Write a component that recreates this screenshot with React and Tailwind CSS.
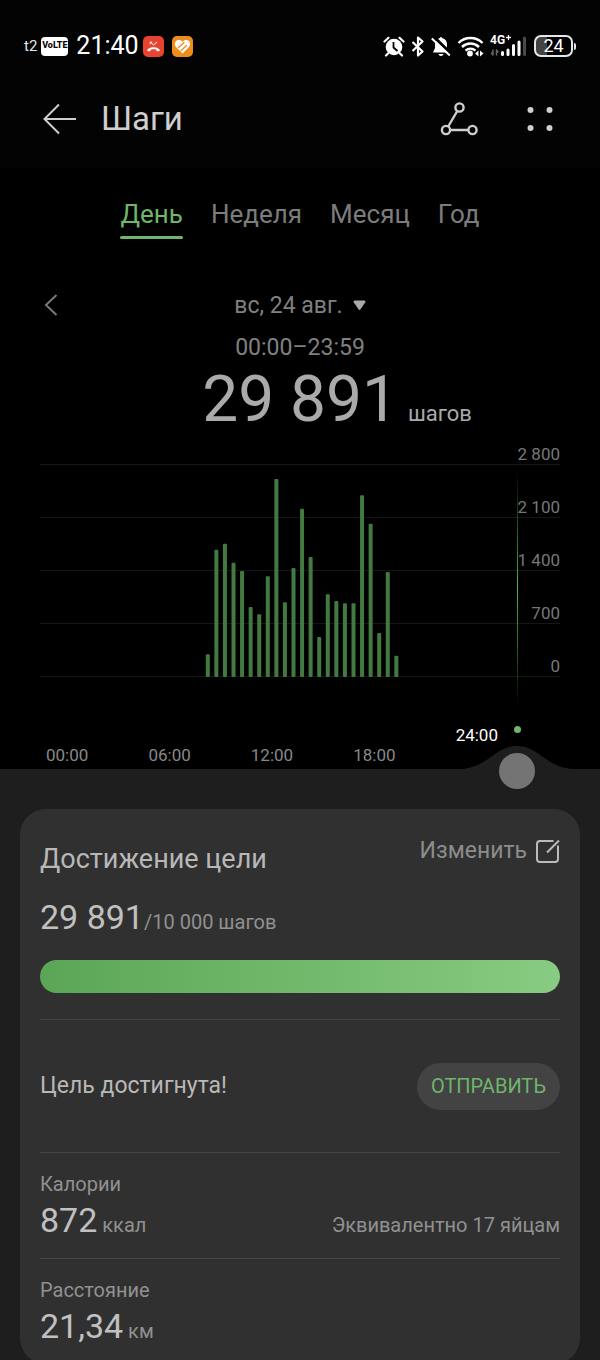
import React from 'react'

const TABS = ['День', 'Неделя', 'Месяц', 'Год']
const LEVELS = ['2 800', '2 100', '1 400', '700', '0']
const HOURS = ['00:00', '06:00', '12:00', '18:00']
const MAX_STEPS = 2800
const STEPS = [
  300, 1680, 1760, 1510, 1400, 925, 828, 1330, 2615, 987, 1440, 2223,
  1585, 528, 1092, 1004, 973, 973, 2400, 2025, 581, 1387, 281,
]

const StatusBar = () => {
  return (
    <div className="flex h-[92px] items-center justify-between px-6 text-white">
      <div className="flex items-center">
        <span className="text-[15px] leading-5 text-gray-200">t2</span>
        <span className="ml-1 flex h-[19px] w-[27px] items-center justify-center rounded-[4px] bg-white text-[9px] font-extrabold text-black">VoLTE</span>
        <span className="ml-2 text-[25px] leading-8">21:40</span>
        <svg className="ml-1" width="21" height="21" viewBox="0 0 21 21" fill="none">
          <rect width="21" height="21" rx="5" fill="#e8432f" />
          <path d="M4.2 14.6c-.3-1.2 2.600-3.300 6.300-3.300s6.600 2.100 6.300 3.300c-.2.9-3 .9-3.400.2l-.3-1.200c-1.600-.6-3.600-.6-5.200 0l-.3 1.200c-.4.7-3.200.7-3.400-.2z" fill="#fff" />
          <path d="M7.500 6.200l3 2.800 3.600-3M7.200 8.200v-2h2" stroke="#fff" strokeWidth="1" />
        </svg>
        <svg className="ml-2" width="21" height="21" viewBox="0 0 21 21" fill="none">
          <rect width="21" height="21" rx="5" fill="#ef8d1c" />
          <path d="M10.500 17.500L4 11C1.700 8.600 3 4.200 6.600 4c1.700-.1 2.800.6 3.900 1.700C11.600 4.600 12.800 4 14.300 4c3.700.1 5 4.300 2.700 7z" fill="#fff" />
          <path d="M6.500 11.500l5.500-5M9 14.800l5.500-5.300" stroke="#ef8d1c" strokeWidth="1.300" strokeLinecap="round" />
        </svg>
      </div>

      <div className="flex items-center">
        <svg width="22" height="21" viewBox="0 0 22 21" fill="none">
          <circle cx="11" cy="11" r="8.300" fill="#fff" />
          <path d="M1.500 5.500L5.500 1.800M20.500 5.500L16.500 1.800M5 17.500L3 19.500M17 17.500l2 2" stroke="#fff" strokeWidth="2.200" strokeLinecap="round" />
          <path d="M10.500 6v5.500l4 3.500" stroke="#000" strokeWidth="1.800" />
        </svg>
        <svg className="ml-[6px]" width="14" height="21" viewBox="0 0 14 21" fill="none" stroke="#fff" strokeWidth="2.200" strokeLinejoin="round">
          <path d="M1.500 6l10 9.500L7 19.500v-18l4.500 4L1.500 15" />
        </svg>
        <svg className="ml-[6px]" width="20" height="21" viewBox="0 0 20 21" fill="none">
          <path d="M8.800 2c.3-1.300 2.100-1.300 2.400 0 3.300.8 4.800 3.200 4.800 6.500v3.500l2 4.500H2l2-4.500V8.500C4 5.200 5.500 2.800 8.800 2z" fill="#fff" />
          <path d="M7.500 18h5c-.5 2.500-4.500 2.500-5 0z" fill="#fff" />
          <path d="M2.500 .5l18 17.500" stroke="#000" strokeWidth="3" />
          <path d="M.8 2.500l18 17" stroke="#fff" strokeWidth="2" />
        </svg>
        <svg className="ml-[6px]" width="27" height="21" viewBox="0 0 27 21" fill="none">
          <path d="M1.500 7c6.500-6.600 17.500-6.600 24 0M5 11c5-4.600 12-4.600 17 0M8.500 14.600c3-2.600 7-2.600 10 0" stroke="#fff" strokeWidth="2.400" />
          <circle cx="13" cy="17.500" r="2.900" fill="#fff" />
          <path d="M18 17.500l3.500-3v6zM26.500 17.500L23 14.500v6z" fill="#fff" />
        </svg>
        <div className="relative ml-[6px] h-[22px] w-9">
          <span className="absolute -top-px left-0 text-[12px] font-bold leading-3">4G</span>
          <svg className="h-full w-full" viewBox="0 0 36 22" fill="none" strokeLinecap="round">
            <path d="M16.500 2.500h4M18.500 .5v4" stroke="#fff" strokeWidth="1.300" />
            <path d="M3 15v5M6.500 15v5M1.500 18l1.500 2M8 17l-1.500-2" stroke="#666" strokeWidth="1.500" />
            <path d="M12.500 17.500v2M18 15v4.500M23.500 10.500v9M29 7v12.500" stroke="#fff" strokeWidth="3" />
            <path d="M34.500 3v16.500" stroke="#4a4a4a" strokeWidth="3" />
          </svg>
        </div>
        <div className="ml-2 flex h-[22px] w-[39px] items-center justify-center rounded-[7px] border-2 border-gray-200 bg-linear-to-r from-[#444] from-30% to-black to-30% text-[18px] leading-none">24</div>
        <div className="ml-px h-[7px] w-[2px] rounded-r bg-gray-200"></div>
      </div>
    </div>
  )
}

const Header = () => {
  return (
    <header className="flex h-[76px] items-center pb-[22px] pl-[43px] pr-[46px] text-[#cfcfcf]">
      <button aria-label="Назад">
        <svg width="34" height="32" viewBox="0 0 34 32" fill="none" stroke="currentColor" strokeWidth="2">
          <path d="M16 1.500L1.500 16 16 30.500M1.500 16H33" />
        </svg>
      </button>
      <h1 className="ml-6 text-[33px] leading-10">Шаги</h1>
      <button className="ml-auto" aria-label="Маршрут">
        <svg width="38" height="34" viewBox="0 0 38 34" fill="none" stroke="currentColor" strokeWidth="2.400">
          <circle cx="19.500" cy="5.500" r="4.100" />
          <circle cx="6" cy="28" r="4.100" />
          <circle cx="32.500" cy="28" r="4.100" />
          <path d="M17.300 9L8.200 24.500M10.100 28h18.300" />
        </svg>
      </button>
      <button className="ml-12" aria-label="Меню">
        <svg width="28" height="26" viewBox="0 0 28 26" fill="currentColor">
          <circle cx="4.500" cy="4" r="3" />
          <circle cx="23.500" cy="4" r="3" />
          <circle cx="4.500" cy="22" r="3" />
          <circle cx="23.500" cy="22" r="3" />
        </svg>
      </button>
    </header>
  )
}

const Tabs = () => {
  return (
    <nav className="flex justify-center gap-7 pt-7 text-[26px] leading-9">
      {TABS.map((tab, i) => (
        <button key={tab} className={i === 0 ? 'text-[#6fb56b]' : 'text-[#7c7c7c]'}>
          {tab}
          <span className={i === 0 ? 'mt-1 block h-[3px] rounded-full bg-[#6fb56b]' : 'mt-1 block h-[3px]'}></span>
        </button>
      ))}
    </nav>
  )
}

const Summary = () => {
  return (
    <section className="pt-[47px] text-[#808080]">
      <div className="relative flex h-10 items-center justify-center">
        <button className="absolute left-11" aria-label="Предыдущий день">
          <svg width="14" height="24" viewBox="0 0 14 24" fill="none" stroke="#777" strokeWidth="2">
            <path d="M12.500 1L2 11l10.500 10" />
          </svg>
        </button>
        <button className="flex items-center gap-[10px] text-[23px] leading-8">
          вс, 24 авг.
          <svg width="13" height="13" viewBox="0 0 13 13" fill="#aaa">
            <path d="M1.500 .5h10q1.500 .5 .8 1.800L7.500 9.300q-1 1.300-2 0L.7 2.300Q0 1 1.500 .5z" />
          </svg>
        </button>
      </div>
      <p className="pt-[6px] text-center text-[23px] leading-8">00:00–23:59</p>
      <p className="flex items-baseline justify-center pl-[74px] text-[#aaa]">
        <span className="text-[64px] leading-[72px]">29 891</span>
        <span className="ml-[10px] text-[22px]">шагов</span>
      </p>
    </section>
  )
}

const Chart = () => {
  return (
    <section className="relative h-[333px]">
      <div className="relative mx-10">
        <ul className="text-right text-[17px] leading-5 text-[#777]">
          {LEVELS.map((level, i) => (
            <li key={level} className={i === 0 ? 'h-[29px] border-b border-[#161616] pt-2' : 'h-[53px] border-b border-[#161616] pt-8'}>{level}</li>
          ))}
        </ul>
        <svg className="absolute bottom-0 left-0 h-[212px] w-full" viewBox="0 0 520 212" preserveAspectRatio="none">
          {STEPS.map((value, i) => {
            const height = (value / MAX_STEPS) * 212
            return <rect key={i} x={165.8 + i * 8.57} y={212 - height} width="4" height={height} rx="1" fill="#437a41" />
          })}
        </svg>
      </div>

      {/* day cursor */}
      <div className="absolute right-[82px] top-9 h-[236px] w-px bg-linear-to-b from-transparent via-[#4db846] to-transparent"></div>
      <div className="absolute right-[79px] top-[290px] h-[7px] w-[7px] rounded-full bg-[#6fb56b]"></div>

      <ol className="ml-4 mr-[72px] mt-12 grid grid-cols-5 text-center text-[17px] leading-5 text-[#888]">
        {HOURS.map((hour) => (
          <li key={hour} className="pt-5">{hour}</li>
        ))}
        <li className="text-white">24:00</li>
      </ol>

      <svg className="absolute bottom-0 right-[17px]" width="132" height="23" viewBox="0 0 132 23" fill="#1e1e1e">
        <path d="M10 23C38 21 44 0 66 0s28 21 56 23z" />
      </svg>
      <input
        type="range"
        aria-label="Время"
        min="0"
        max="24"
        defaultValue="24"
        className="absolute -bottom-5 left-12 right-[65px] h-9 appearance-none bg-transparent [&::-webkit-slider-thumb]:size-9 [&::-webkit-slider-thumb]:appearance-none [&::-webkit-slider-thumb]:rounded-full [&::-webkit-slider-thumb]:bg-[#747474]"
      />
    </section>
  )
}

const Metric = ({ label, value, unit, note }) => {
  return (
    <div className="h-[106px] border-t border-[#454545] pt-[17px] text-[20px] leading-7 text-[#919191]">
      <p>{label}</p>
      <div className="flex items-baseline justify-between">
        <p>
          <span className="text-[34px] leading-[44px] text-[#c0c0c0]">{value}</span> {unit}
        </p>
        <p>{note}</p>
      </div>
    </div>
  )
}

const GoalCard = () => {
  return (
    <section className="mx-5 rounded-[26px] bg-[#303030] px-5 pt-6 text-[#b8b8b8]">
      <div className="flex items-start justify-between">
        <h2 className="pt-2 text-[27px] leading-9">Достижение цели</h2>
        <button className="flex items-center gap-2 text-[23px] leading-9 text-[#8c8c8c]">
          Изменить
          <svg width="25" height="25" viewBox="0 0 25 25" fill="none" stroke="#bbb" strokeWidth="2">
            <path d="M18.500 2H5Q2 2 2 5v15q0 3 3 3h15q3 0 3-3V6.500M12 13.500L24 1.500" />
          </svg>
        </button>
      </div>
      <p className="pt-[18px] text-[20px] leading-[44px] text-[#919191]">
        <span className="text-[34px] text-[#c0c0c0]">29 891</span>/10 000 шагов
      </p>
      <div className="mt-4 h-[33px] rounded-full bg-linear-to-r from-[#5ba656] to-[#88cb82]"></div>
      <div className="mt-[26px] flex h-[133px] items-center justify-between border-t border-[#454545]">
        <p className="text-[23px]">Цель достигнута!</p>
        <button className="h-[47px] rounded-full bg-[#434343] px-[14px] text-[20px] text-[#6fb56b]">ОТПРАВИТЬ</button>
      </div>
      <Metric label="Калории" value="872" unit="ккал" note="Эквивалентно 17 яйцам" />
      <Metric label="Расстояние" value="21,34" unit="км" />
    </section>
  )
}

const App = () => {
  return (
    <div className="bg-[#1e1e1e] font-['Roboto',sans-serif]">
      <div className="bg-black">
        <div className="bg-[#030303]">
          <StatusBar />
          <Header />
        </div>
        <Tabs />
        <Summary />
        <Chart />
      </div>
      <div className="pt-10">
        <GoalCard />
      </div>
    </div>
  )
}

export default App
